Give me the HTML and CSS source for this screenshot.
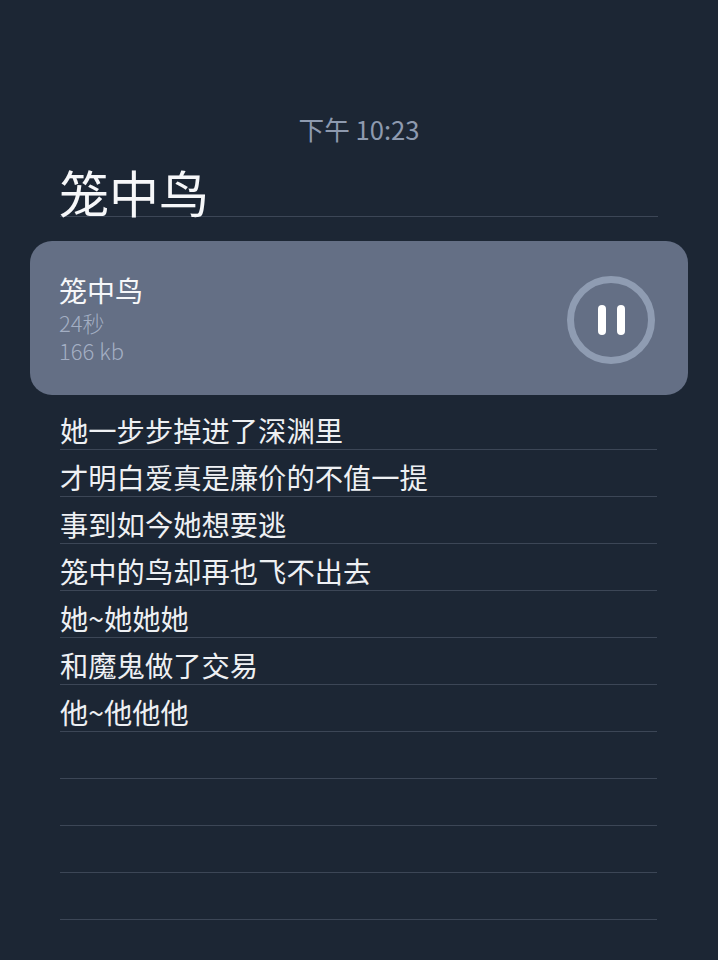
FILE: index.html
```html
<!DOCTYPE html>
<html>
<head>
<meta charset="utf-8">
<title>笼中鸟</title>
<link rel="stylesheet" href="styles.css">
</head>
<body>
<div class="screen">
	<div class="clock">下午 10:23</div>
	<div class="title">笼中鸟</div>
	<div class="card">
		<div class="card_info">
			<p class="card_name">笼中鸟</p>
			<p class="card_meta">24秒</p>
			<p class="card_meta">166 kb</p>
		</div>
		<div class="pause">
			<span class="pause_bar"></span>
			<span class="pause_bar"></span>
		</div>
	</div>
	<div class="lines">
		<p>她一步步掉进了深渊里</p>
		<p>才明白爱真是廉价的不值一提</p>
		<p>事到如今她想要逃</p>
		<p>笼中的鸟却再也飞不出去</p>
		<p>她~她她她</p>
		<p>和魔鬼做了交易</p>
		<p>他~他他他</p>
		<p></p>
		<p></p>
		<p></p>
		<p></p>
	</div>
</div>
</body>
</html>
```

FILE: styles.css
```css
body, div, p {
	margin: 0;
	padding: 0;
}
body {
	background-color: #1c2634;
	font-family: "Noto Sans CJK SC", "Noto Sans", sans-serif;
	font-weight: 400;
	color: #fff;
}
.screen {
	width: 718px;
	height: 960px;
	overflow: hidden;
	padding-top: 112px;
	box-sizing: border-box;
}
.clock {
	height: 38px;
	line-height: 34px;
	font-size: 25.6px;
	color: #8e9aaf;
	text-align: center;
}
.title {
	margin: 0 60px;
	height: 52px;
	padding-top: 14px;
	line-height: 54px;
	font-size: 50px;
	text-indent: -1px;
	color: #f6f7f9;
	border-bottom: 1px solid #3c4656;
}
.card {
	display: flex;
	align-items: center;
	justify-content: space-between;
	margin: 24px 30px 0 30px;
	height: 154px;
	padding: 0 33px 0 29px;
	box-sizing: border-box;
	border-radius: 22px;
	background-color: #646f85;
}
.card_name {
	font-size: 28px;
	line-height: 36px;
	color: #f6f7f9;
}
.card_meta {
	font-size: 22px;
	line-height: 28px;
	font-weight: 300;
	color: #a3aec3;
}
.pause {
	display: flex;
	justify-content: center;
	align-items: center;
	gap: 11px;
	width: 88px;
	height: 88px;
	margin-top: 4px;
	box-sizing: border-box;
	border: 7px solid #8f9cb2;
	border-radius: 50%;
}
.pause_bar {
	width: 8px;
	height: 30px;
	border-radius: 4px;
	background-color: #fff;
}
.lines {
	margin: 8px 61px 0 60px;
}
.lines p {
	height: 36px;
	padding-top: 10px;
	line-height: 34px;
	font-size: 28.3px;
	color: #eef0f3;
	border-bottom: 1px solid #3c4656;
}
```
